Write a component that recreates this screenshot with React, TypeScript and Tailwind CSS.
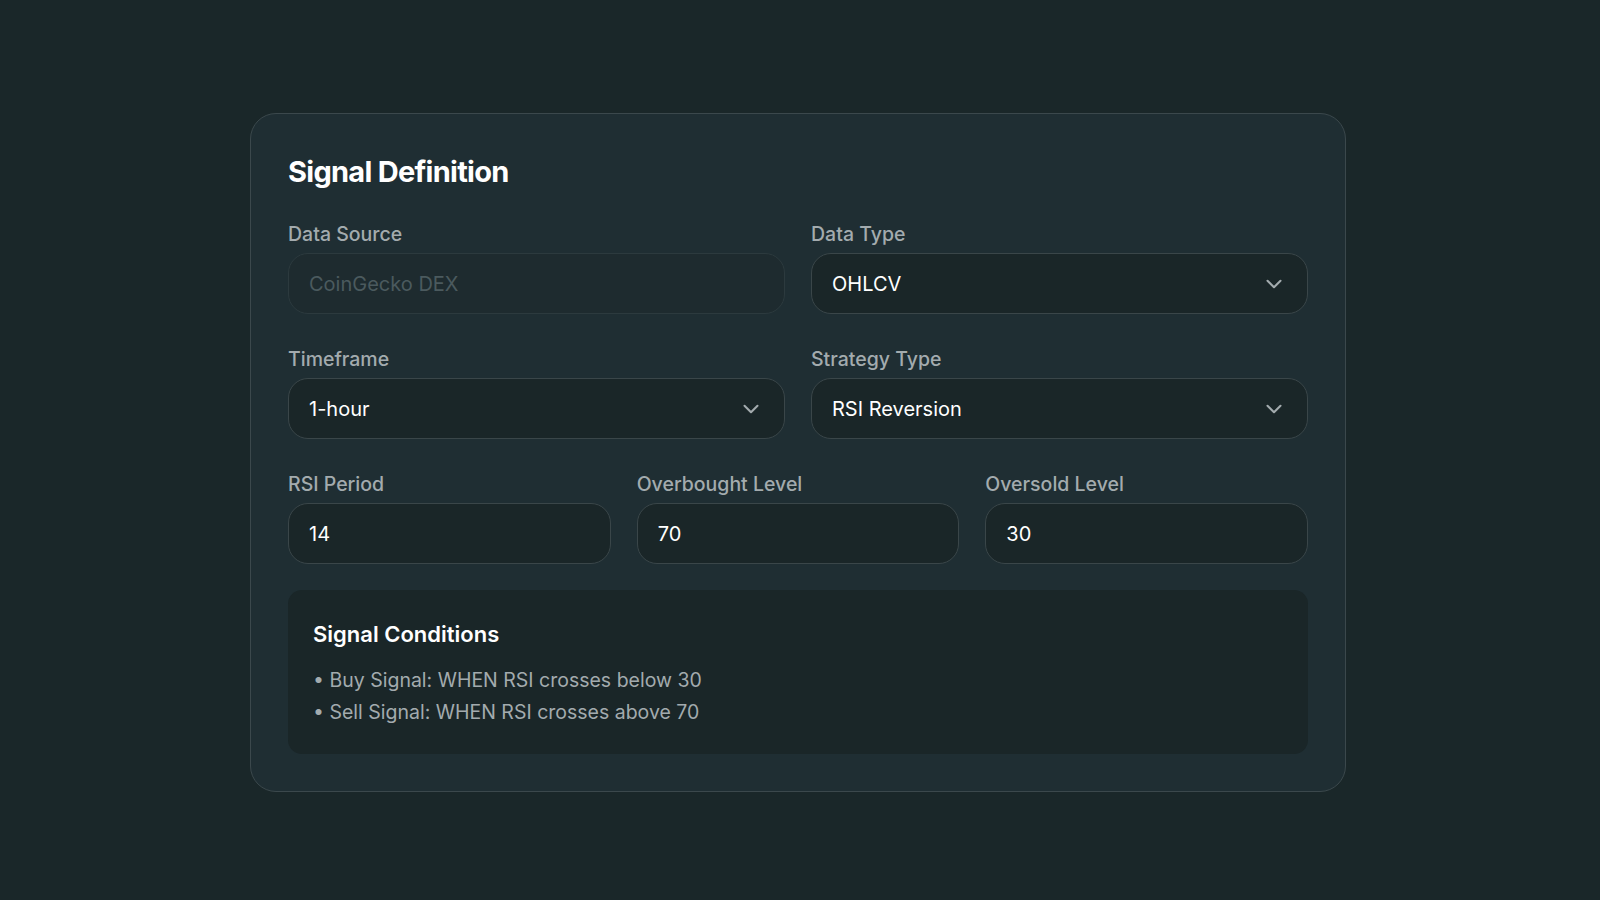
import { ChevronDown } from 'lucide-react';

function Label({ children }: { children: React.ReactNode }) {
  return <label className="block text-[19.5px] leading-[26px] font-medium text-[#a3abae]">{children}</label>;
}

function TextField({ label, value, muted }: { label: string; value: string; muted?: boolean }) {
  return (
    <div className="flex flex-col gap-[6px]">
      <Label>{label}</Label>
      <div
        className={`h-[61px] rounded-[20px] border px-[20px] flex items-center text-[20px] ${
          muted ? 'bg-[#1e2b2f] border-[#2c3a3e] text-[#4b5a5e]' : 'bg-[#1a2628] border-[#3a4649] text-white'
        }`}
      >
        {value}
      </div>
    </div>
  );
}

function SelectField({ label, value }: { label: string; value: string }) {
  return (
    <div className="flex flex-col gap-[6px]">
      <Label>{label}</Label>
      <div className="h-[61px] rounded-[20px] border border-[#3a4649] bg-[#1a2628] pl-[20px] pr-[20px] flex items-center justify-between text-[20px] text-white">
        <span>{value}</span>
        <ChevronDown size={26} strokeWidth={1.9} className="text-[#a3abae]" />
      </div>
    </div>
  );
}

export default function App() {
  return (
    <div
      className="min-h-screen w-full bg-[#1a2729] flex items-center justify-center pt-[5px] pr-[4px]"
      style={{ fontFamily: 'Inter, "Noto Sans", sans-serif' }}
    >
      <div className="w-[1096px] rounded-[26px] border border-[#3b484c] bg-[#1f2e33] px-[37px] pt-[40px] pb-[37px]">
        <h2 className="text-[29px] leading-[36px] font-bold tracking-[-0.025em] text-white">Signal Definition</h2>

        <div className="mt-[31px] flex flex-col gap-[32px]">
          <div className="grid grid-cols-2 gap-x-[26px]">
            <TextField label="Data Source" value="CoinGecko DEX" muted />
            <SelectField label="Data Type" value="OHLCV" />
          </div>
          <div className="grid grid-cols-2 gap-x-[26px]">
            <SelectField label="Timeframe" value="1-hour" />
            <SelectField label="Strategy Type" value="RSI Reversion" />
          </div>
          <div className="grid grid-cols-3 gap-x-[26px]">
            <TextField label="RSI Period" value="14" />
            <TextField label="Overbought Level" value="70" />
            <TextField label="Oversold Level" value="30" />
          </div>
        </div>

        <div className="mt-[26px] rounded-[14px] bg-[#1a2628] px-[25px] pt-[29px] pb-[27px]">
          <h3 className="text-[22px] leading-[30px] font-semibold text-white">Signal Conditions</h3>
          <ul className="mt-[16px] flex flex-col gap-[1.5px] text-[19.5px] leading-[30px] text-[#a3abae]">
            <li>• Buy Signal: WHEN RSI crosses below 30</li>
            <li>• Sell Signal: WHEN RSI crosses above 70</li>
          </ul>
        </div>
      </div>
    </div>
  );
}
